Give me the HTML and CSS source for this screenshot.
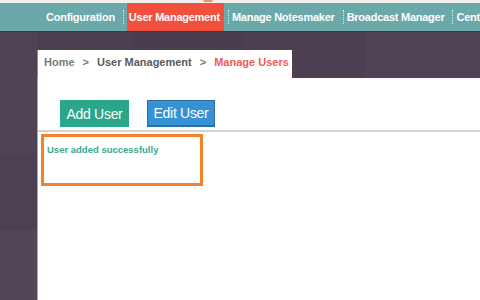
FILE: index.html
```html
<!DOCTYPE html>
<html>
<head>
<meta charset="utf-8">
<link rel="stylesheet" href="styles.css">
</head>
<body>
<div class="topstrip"><span class="logo-tip"></span></div>
<nav class="menu">
  <a class="item">Configuration</a><span class="sep"></span>
  <a class="item active">User Management</a><span class="sep"></span>
  <a class="item">Manage Notesmaker</a><span class="sep"></span>
  <a class="item">Broadcast Manager</a><span class="sep"></span>
  <a class="item">Center Manager</a>
</nav>
<div class="stage">
  <div class="crumbs">
    <span class="c-link">Home</span><span class="c-sep">&gt;</span><span class="c-mid">User Management</span><span class="c-sep">&gt;</span><span class="c-cur">Manage Users</span>
  </div>
  <div class="panel">
    <div class="actions">
      <button class="btn btn-add">Add User</button>
      <button class="btn btn-edit">Edit User</button>
    </div>
    <div class="rule"></div>
    <div class="notice">User added successfully</div>
  </div>
</div>
</body>
</html>
```

FILE: styles.css
```css
html, body {
  margin: 0;
  padding: 0;
  height: 100%;
  overflow: hidden;
}
body {
  background-color: #4c3f51;
  background-image:
    linear-gradient(90deg, rgba(255,255,255,0.02) 0 37px, transparent 37px 132px, rgba(0,0,0,0.03) 132px 245px, transparent 245px 365px, rgba(255,255,255,0.02) 365px 480px),
    linear-gradient(180deg, transparent 0 155px, rgba(0,0,0,0.04) 155px 230px, rgba(255,255,255,0.02) 230px 300px);
  font-family: "Liberation Sans", Arial, sans-serif;
}
.topstrip {
  height: 3px;
  background: #f3f1ef;
  position: relative;
}
.logo-tip {
  position: absolute;
  left: 203px;
  top: 0;
  width: 10px;
  height: 2px;
  border-radius: 0 0 5px 5px;
  background: #e59a62;
}
.menu {
  height: 28px;
  background: #6aa8a9;
  display: flex;
  align-items: center;
  padding-left: 46px;
  border-bottom: 1px solid #3f3a44;
  white-space: nowrap;
  overflow: hidden;
}
.item {
  color: #ffffff;
  font-size: 11px;
  font-weight: bold;
  letter-spacing: -0.25px;
  height: 28px;
  line-height: 28px;
  padding: 0 4px 0 0;
}
.item.active {
  background: #f2503f;
  padding: 0 4px 0 2px;
}
.sep {
  width: 0;
  height: 14px;
  border-left: 1px dotted #d9ecec;
  margin: 0 3px 0 4px;
}
.stage {
  padding: 18px 0 0 37px;
}
.crumbs {
  width: 248px;
  height: 24px;
  padding-bottom: 4px;
  background: #ffffff;
  padding-left: 6px;
  display: flex;
  align-items: center;
  font-size: 11px;
  font-weight: bold;
  border-left: 1px solid #8d8790;
  box-sizing: content-box;
}
.c-link { color: #7a7a7a; }
.c-mid { color: #5a5a5a; }
.c-cur { color: #f05a55; }
.c-sep {
  color: #777777;
  margin: 0 8px 0 8px;
  font-weight: bold;
}
.panel {
  background: #ffffff;
  height: 222px;
  border-left: 1px solid #a9a5ab;
}
.actions {
  display: flex;
  gap: 18px;
  padding: 22px 0 0 22px;
  height: 27px;
}
.btn {
  height: 27px;
  padding: 0;
  border: none;
  color: #ffffff;
  font-family: "Liberation Sans", Arial, sans-serif;
  font-size: 14px;
  letter-spacing: -0.3px;
}
.btn-add {
  width: 69px;
  background: #2aa68b;
}
.btn-edit {
  width: 68px;
  background: #3592d4;
  border: 1px solid #2f6f9c;
  border-bottom-width: 2px;
}
.rule {
  margin-top: 3px;
  height: 2px;
  background: #d3d3d3;
}
.notice {
  margin: 2px 0 0 3px;
  width: 156px;
  height: 46px;
  border: 3px solid #f5812f;
  box-sizing: content-box;
  color: #3aa88f;
  font-size: 9.5px;
  font-weight: bold;
  line-height: 26px;
  text-indent: 3px;
}
```
